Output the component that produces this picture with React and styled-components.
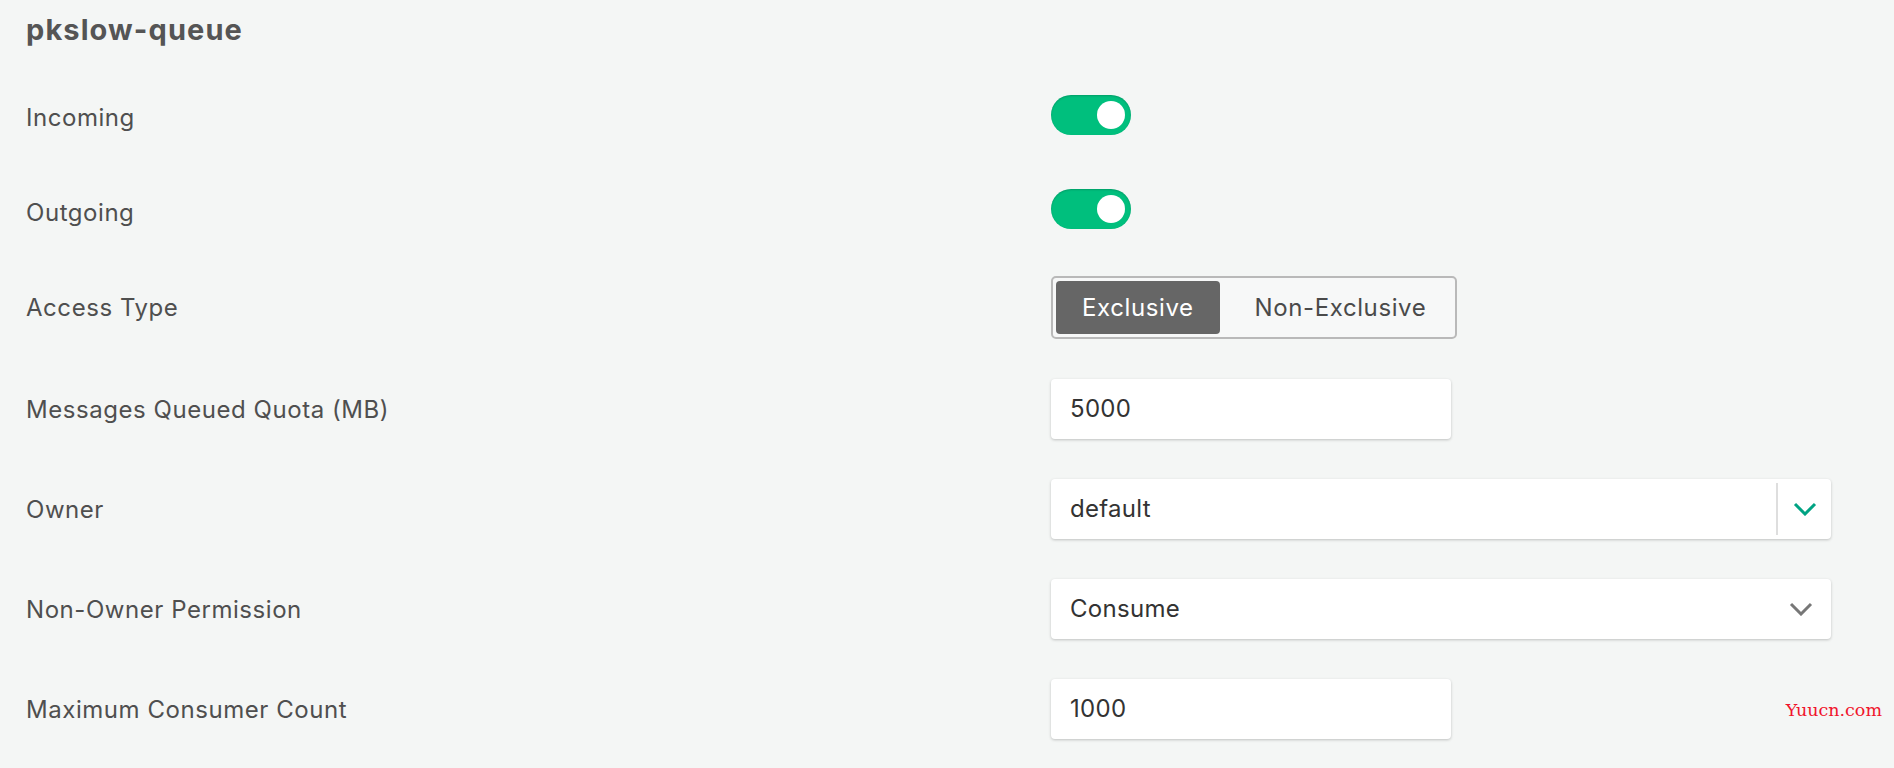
import React from "react";
import styled, { createGlobalStyle } from "styled-components";

const Global = createGlobalStyle`
  html, body { margin: 0; padding: 0; background: #f4f6f5; }
  body { font-family: Inter, "Open Sans", sans-serif; }
`;

const Page = styled.div`
  position: relative;
  width: 1894px;
  height: 768px;
  box-sizing: border-box;
  padding: 13px 26px 0 26px;
  background: #f4f6f5;
  overflow: hidden;
`;

const Title = styled.h1`
  margin: 0 0 41px 0;
  font-size: 29px;
  line-height: 34px;
  font-weight: 700;
  letter-spacing: 1.1px;
  color: #555;
`;

const Form = styled.div`
  display: grid;
  grid-template-columns: 1025px 1fr;
  row-gap: 40px;
`;

const Label = styled.div`
  display: flex;
  align-items: center;
  box-sizing: border-box;
  height: ${(p) => p.$h}px;
  padding-top: ${(p) => p.$shift || 0}px;
  font-size: 24px;
  letter-spacing: 0.55px;
  color: #4f4f4f;
`;

const Control = styled.div`
  display: flex;
  align-items: center;
  height: ${(p) => p.$h}px;
`;

const Toggle = styled.div`
  width: 80px;
  height: 40px;
  box-sizing: border-box;
  border-radius: 20px;
  background: #00bf7d;
  box-shadow: inset 0 1px 2px rgba(0, 0, 0, 0.18);
  display: flex;
  align-items: center;
  justify-content: ${(p) => (p.$on ? "flex-end" : "flex-start")};
  padding: 0 6px;
`;

const Knob = styled.div`
  width: 28px;
  height: 28px;
  border-radius: 50%;
  background: #fff;
`;

const Segmented = styled.div`
  display: flex;
  align-items: stretch;
  gap: 9px;
  height: 63px;
  box-sizing: border-box;
  border: 2px solid #b9b9b9;
  border-radius: 5px;
  padding: 3px 3px;
  background: #f7f8f8;
`;

const SegButton = styled.div`
  display: flex;
  align-items: center;
  padding: 0 26px;
  border-radius: 4px;
  font-size: 24px;
  letter-spacing: 0.6px;
  background: ${(p) => (p.$active ? "#666666" : "transparent")};
  color: ${(p) => (p.$active ? "#ffffff" : "#4a4a4a")};
`;

const Field = styled.div`
  display: flex;
  align-items: center;
  width: ${(p) => p.$w}px;
  height: 60px;
  box-sizing: border-box;
  background: #fff;
  border-radius: 4px;
  box-shadow: 0 1px 3px rgba(0, 0, 0, 0.22);
`;

const FieldText = styled.div`
  flex: 1;
  padding-left: 19px;
  padding-bottom: 2px;
  font-size: 24px;
  letter-spacing: 0.3px;
  color: #333;
`;

const Divider = styled.div`
  width: 2px;
  align-self: stretch;
  margin: 4px 0;
  background: #dedede;
`;

const Indicator = styled.div`
  width: ${(p) => p.$w}px;
  display: flex;
  align-items: center;
  justify-content: center;
`;

const Watermark = styled.div`
  position: absolute;
  right: 12px;
  top: 700px;
  font-family: "DejaVu Serif", serif;
  font-size: 17.5px;
  color: #f0142b;
`;

const Chevron = ({ color }) => (
  <svg width="24" height="14" viewBox="0 0 24 14">
    <path d="M2 2 L12 12 L22 2" fill="none" stroke={color} strokeWidth="3" />
  </svg>
);

const rows = [
  { label: "Incoming", h: 54, type: "toggle", shift: 5 },
  { label: "Outgoing", h: 54, type: "toggle", shift: 7 },
  { label: "Access Type", h: 63, type: "segment" },
  { label: "Messages Queued Quota (MB)", h: 60, type: "input", value: "5000" },
  { label: "Owner", h: 60, type: "owner", value: "default" },
  { label: "Non-Owner Permission", h: 60, type: "select", value: "Consume" },
  { label: "Maximum Consumer Count", h: 60, type: "input", value: "1000" },
];

function renderControl(r) {
  switch (r.type) {
    case "toggle":
      return (
        <Toggle $on>
          <Knob />
        </Toggle>
      );
    case "segment":
      return (
        <Segmented>
          <SegButton $active>Exclusive</SegButton>
          <SegButton>Non-Exclusive</SegButton>
        </Segmented>
      );
    case "input":
      return (
        <Field $w={400}>
          <FieldText>{r.value}</FieldText>
        </Field>
      );
    case "owner":
      return (
        <Field $w={780}>
          <FieldText>{r.value}</FieldText>
          <Divider />
          <Indicator $w={53}>
            <Chevron color="#00a383" />
          </Indicator>
        </Field>
      );
    case "select":
      return (
        <Field $w={780}>
          <FieldText>{r.value}</FieldText>
          <Indicator $w={60}>
            <Chevron color="#777777" />
          </Indicator>
        </Field>
      );
    default:
      return null;
  }
}

export default function App() {
  return (
    <Page>
      <Global />
      <Title>pkslow-queue</Title>
      <Form>
        {rows.map((r) => (
          <React.Fragment key={r.label}>
            <Label $h={r.h} $shift={r.shift}>{r.label}</Label>
            <Control $h={r.h}>{renderControl(r)}</Control>
          </React.Fragment>
        ))}
      </Form>
      <Watermark>Yuucn.com</Watermark>
    </Page>
  );
}
